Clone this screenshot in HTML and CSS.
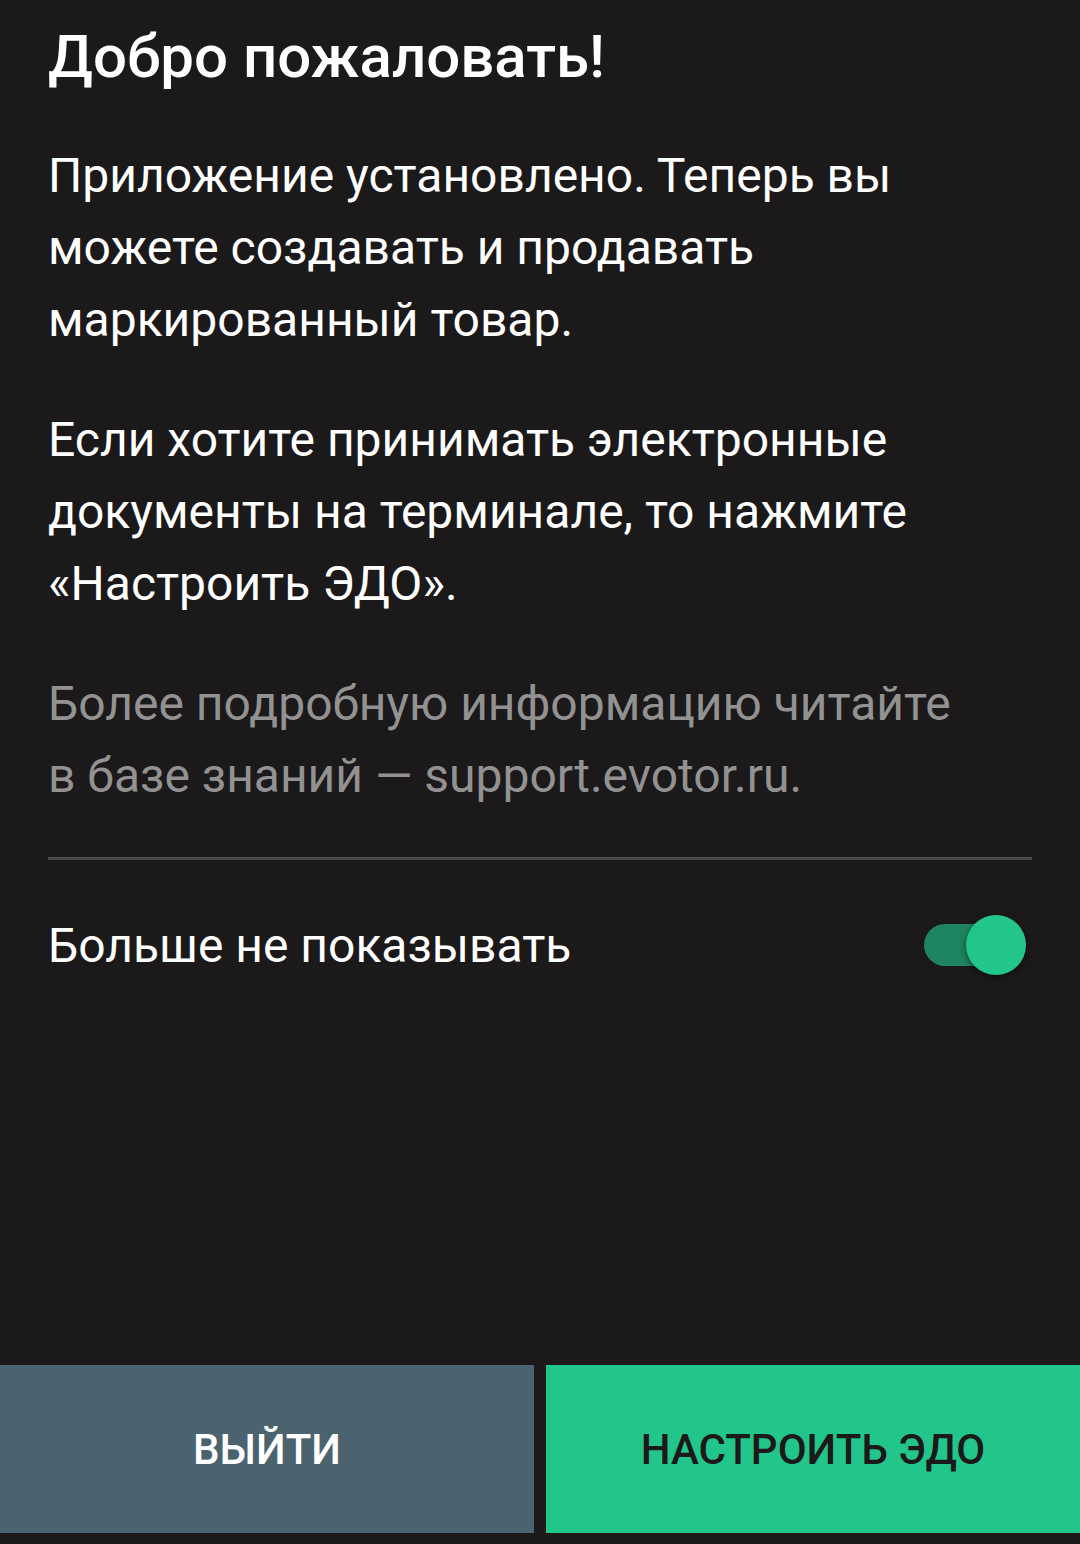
FILE: index.html
```html
<!DOCTYPE html>
<html lang="ru">
  <head>
    <meta charset="UTF-8" />
    <meta name="viewport" content="width=device-width, initial-scale=1.0" />
    <title>Добро пожаловать</title>
    <link rel="stylesheet" href="styles.css">
  </head>
  <body>
    <div class="screen">
      <div class="content">
        <h1>Добро пожаловать!</h1>
        <p>Приложение установлено. Теперь вы можете создавать и продавать маркированный товар.</p>
        <p>Если хотите принимать электронные документы на терминале, то нажмите «Настроить ЭДО».</p>
        <p class="hint">Более подробную информацию читайте в&nbsp;базе знаний — support.evotor.ru.</p>
        <div class="divider"></div>
        <div class="option">
          <span>Больше не показывать</span>
          <div class="switch on">
            <div class="track"></div>
            <div class="thumb"></div>
          </div>
        </div>
      </div>
      <div class="actions">
        <button class="btn btn-exit">ВЫЙТИ</button>
        <button class="btn btn-setup">НАСТРОИТЬ ЭДО</button>
      </div>
    </div>
  </body>
</html>
```

FILE: styles.css
```css
body,
html {
  margin: 0;
  padding: 0;
  font-family: Roboto, "Noto Sans", sans-serif;
  background-color: #1b191a;
  color: #ffffff;
}
.screen {
  display: flex;
  flex-direction: column;
  height: 1544px;
  box-sizing: border-box;
  padding-bottom: 11px;
}
.content {
  flex: 1;
  padding: 0 48px;
}
h1 {
  font-size: 60px;
  font-weight: 500;
  line-height: 72px;
  margin: 21px 0 47px;
}
.content p {
  font-size: 48px;
  line-height: 72px;
  margin: 0 0 48px;
  max-width: 960px;
}
.content p.hint {
  color: #929292;
  margin-bottom: 45px;
}
.divider {
  height: 3px;
  background-color: #4b4a4b;
}
.option {
  display: flex;
  justify-content: space-between;
  align-items: center;
  height: 170px;
  font-size: 48px;
}
.switch {
  position: relative;
  width: 102px;
  height: 60px;
  margin-right: 6px;
}
.track {
  position: absolute;
  left: 0;
  top: 9px;
  width: 96px;
  height: 42px;
  border-radius: 21px;
  background-color: #1f8460;
}
.thumb {
  position: absolute;
  right: 0;
  top: 0;
  width: 60px;
  height: 60px;
  border-radius: 50%;
  background-color: #22c68a;
  box-shadow: 0 2px 6px rgba(0, 0, 0, 0.5);
}
.actions {
  display: flex;
  gap: 12px;
  height: 168px;
}
.btn {
  flex: 1;
  border: none;
  font-family: Roboto, "Noto Sans", sans-serif;
  font-size: 42px;
  font-weight: 500;
  cursor: pointer;
}
.btn-exit {
  background-color: #4b636f;
  color: #ffffff;
}
.btn-setup {
  background-color: #22c68a;
  color: #1b191a;
}
```
